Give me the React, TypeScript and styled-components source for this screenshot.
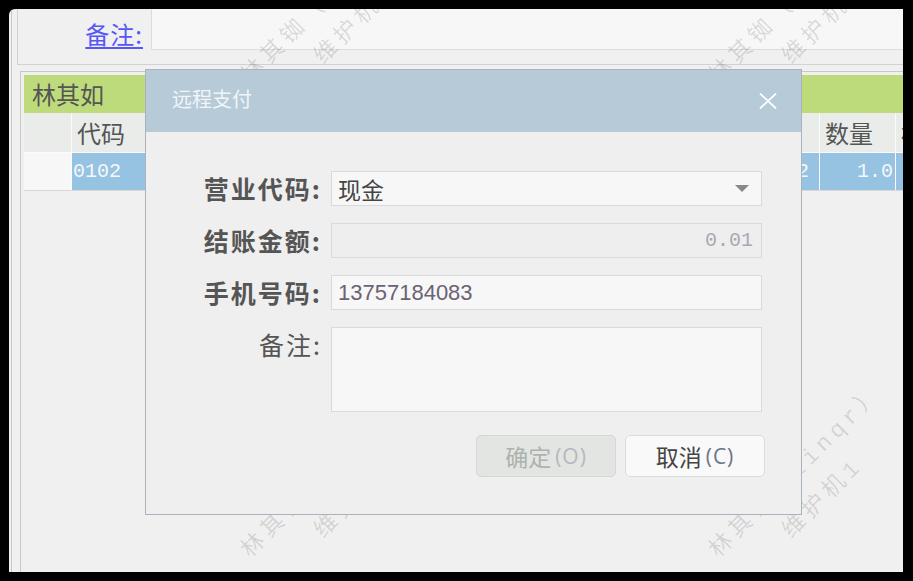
import React from "react";
import styled, { createGlobalStyle } from "styled-components";

const CJK = `"Noto Sans CJK SC", "Noto Sans", sans-serif`;
const MONO = `"Liberation Mono", "DejaVu Sans Mono", monospace`;

const GlobalStyle = createGlobalStyle`
  html, body {
    margin: 0;
    padding: 0;
    background: #000;
  }

  body {
    font-family: ${CJK};
  }
`;

const Frame = styled.div`
  width: 913px;
  height: 581px;
  box-sizing: border-box;
  padding: 9px 10px 9px 9px;
  background: #000;
`;

const Screen = styled.div`
  position: relative;
  height: 100%;
  display: flex;
  padding-left: 2px;
  background: #f0f0f0;
  border-radius: 6px 0 0 0;
  overflow: hidden;
`;

const Workspace = styled.div`
  flex: 1;
  min-width: 0;
  display: flex;
  flex-direction: column;
  border-left: 1px solid #c9c9c9;
`;

const RemarkBar = styled.div`
  height: 55px;
  margin-left: 5px;
  display: flex;
  align-items: flex-start;
  border-left: 1px solid #d2d2d2;
  border-bottom: 1px solid #d2d2d2;
`;

const RemarkLabel = styled.a`
  width: 125px;
  padding-top: 9px;
  text-align: right;
  font-size: 24px;
  letter-spacing: 1px;
  line-height: 32px;
  color: #5757f5;
  text-decoration: underline;
  text-underline-offset: 3px;
`;

const RemarkInput = styled.div`
  flex: 1;
  height: 40px;
  margin: 0 -20px 0 8px;
  background: #f7f7f7;
  border: 1px solid #dcdcdc;
  border-top: none;
`;

const GridPanel = styled.div`
  flex: 1;
  margin: 6px 0 0 8px;
  padding: 3px 0 0 3px;
  border-left: 1px solid #c8c8c8;
  border-top: 1px solid #c8c8c8;
`;

const GridTitle = styled.div`
  height: 38px;
  padding-left: 8px;
  background: #bedb7b;
  color: #555;
  font-size: 24px;
  line-height: 38px;
`;

const Table = styled.div`
  display: grid;
  grid-template-columns: 47px 100px 200px 200px 244px 75px 1fr;
  grid-template-rows: 39px 37px;
  column-gap: 1px;
  row-gap: 1px;
  background: #fbfbfb;
  border-bottom: 1px solid #d9d9d9;
`;

const HeadCell = styled.div`
  padding-left: 5px;
  background: #e9ece9;
  color: #555;
  font-size: 24px;
  line-height: 39px;
  white-space: nowrap;
  overflow: hidden;
`;

const DataCell = styled.div<{ $blank?: boolean; $pad?: number }>`
  padding: 0 ${(p) => p.$pad ?? 0}px 0 1px;
  background: ${(p) => (p.$blank ? "#f7f7f7" : "#95c3e1")};
  color: #f4f8fc;
  font-family: ${MONO};
  font-size: 20px;
  line-height: 37px;
  text-align: ${(p) => (p.$pad !== undefined ? "right" : "left")};
  white-space: nowrap;
  overflow: hidden;
`;

const WatermarkLayer = styled.div`
  position: absolute;
  inset: 0;
  pointer-events: none;
  z-index: 1;
`;

const Mark = styled.div<{ $x: number; $y: number }>`
  position: absolute;
  left: ${(p) => p.$x}px;
  top: ${(p) => p.$y}px;
  transform: translate(-50%, -50%) rotate(-45deg);
  text-align: center;
  white-space: nowrap;
  font-family: "Liberation Mono", ${CJK};
  font-size: 23px;
  line-height: 38px;
  letter-spacing: 5px;
  color: rgba(0, 0, 0, 0.13);
`;

const Dialog = styled.div`
  position: absolute;
  left: 136px;
  top: 60px;
  z-index: 2;
  width: 657px;
  height: 446px;
  box-sizing: border-box;
  display: flex;
  flex-direction: column;
  background: #efefef;
  border: 1px solid #aab3bd;
`;

const DialogHeader = styled.div`
  height: 62px;
  display: flex;
  align-items: center;
  justify-content: space-between;
  padding: 0 24px 0 26px;
  background: #b7cad8;
`;

const DialogTitle = styled.div`
  margin-top: -5px;
  color: #f1f5f8;
  font-size: 20px;
`;

const CloseButton = styled.svg`
  width: 18px;
  height: 16px;
`;

const Form = styled.div`
  display: grid;
  grid-template-columns: 176px 431px;
  grid-template-rows: 35px 35px 35px 85px auto;
  column-gap: 9px;
  row-gap: 17px;
  padding-top: 39px;
`;

const Label = styled.div<{ $bold?: boolean }>`
  text-align: right;
  color: #555;
  font-size: 25px;
  font-weight: ${(p) => (p.$bold ? 700 : 400)};
  letter-spacing: 2px;
  line-height: 35px;
`;

const Field = styled.div<{ $disabled?: boolean }>`
  box-sizing: border-box;
  display: flex;
  align-items: center;
  padding: 0 8px 0 6px;
  background: ${(p) => (p.$disabled ? "#eeeeee" : "#f7f7f7")};
  border: 1px solid #dadada;
`;

const TextValue = styled.span`
  flex: 1;
  color: #444;
  font-size: 23px;
`;

const PhoneValue = styled.span`
  color: #6b6274;
  font-family: "Liberation Sans", Arial, sans-serif;
  font-size: 22px;
`;

const AmountValue = styled.span`
  flex: 1;
  text-align: right;
  color: #a9a9b2;
  font-family: ${MONO};
  font-size: 20px;
`;

const Caret = styled.svg`
  width: 14px;
  height: 7px;
  margin-right: 4px;
`;

const Actions = styled.div`
  grid-column: 2;
  display: flex;
  justify-content: flex-end;
  gap: 9px;
  margin: 6px -3px 0 0;
`;

const Button = styled.div<{ $disabled?: boolean }>`
  width: 140px;
  height: 42px;
  box-sizing: border-box;
  display: flex;
  align-items: center;
  justify-content: center;
  border-radius: 5px;
  border: 1px solid ${(p) => (p.$disabled ? "#d5d9d5" : "#dcdcdc")};
  background: ${(p) => (p.$disabled ? "#e2e5e2" : "#f9f9f9")};
  color: ${(p) => (p.$disabled ? "#aeb2ae" : "#444")};
  font-size: 23px;
`;

const Hotkey = styled.span<{ $disabled?: boolean }>`
  margin-left: 4px;
  color: ${(p) => (p.$disabled ? "#b4b8bc" : "#6b7489")};
  font-family: "Open Sans", "Noto Sans", sans-serif;
  font-size: 21px;
  letter-spacing: 1px;
`;

const marks = [
  { x: 333, y: 2 },
  { x: 801, y: 2 },
  { x: 333, y: 476 },
  { x: 801, y: 476 },
];

const App: React.FC = () => {
  return (
    <>
      <GlobalStyle />
      <Frame>
        <Screen>
          <Workspace>
            <RemarkBar>
              <RemarkLabel>备注:</RemarkLabel>
              <RemarkInput />
            </RemarkBar>
            <GridPanel>
              <GridTitle>林其如</GridTitle>
              <Table>
                <HeadCell />
                <HeadCell>代码</HeadCell>
                <HeadCell>名称</HeadCell>
                <HeadCell>规格</HeadCell>
                <HeadCell>单价</HeadCell>
                <HeadCell>数量</HeadCell>
                <HeadCell>标价</HeadCell>
                <DataCell $blank />
                <DataCell>0102</DataCell>
                <DataCell />
                <DataCell />
                <DataCell $pad={10}>0.02</DataCell>
                <DataCell $pad={2}>1.0</DataCell>
                <DataCell />
              </Table>
            </GridPanel>
          </Workspace>

          <WatermarkLayer>
            {marks.map((m, i) => (
              <Mark key={i} $x={m.x} $y={m.y}>
                林其铷（linqr）
                <br />
                维护机1
              </Mark>
            ))}
          </WatermarkLayer>

          <Dialog>
            <DialogHeader>
              <DialogTitle>远程支付</DialogTitle>
              <CloseButton viewBox="0 0 18 16">
                <path d="M1 0.5 L17 15.5 M17 0.5 L1 15.5" stroke="#fff" strokeWidth="1.8" />
              </CloseButton>
            </DialogHeader>
            <Form>
              <Label $bold>营业代码:</Label>
              <Field>
                <TextValue>现金</TextValue>
                <Caret viewBox="0 0 14 7">
                  <polygon points="0,0 14,0 7,7" fill="#888" />
                </Caret>
              </Field>
              <Label $bold>结账金额:</Label>
              <Field $disabled>
                <AmountValue>0.01</AmountValue>
              </Field>
              <Label $bold>手机号码:</Label>
              <Field>
                <PhoneValue>13757184083</PhoneValue>
              </Field>
              <Label>备注:</Label>
              <Field />
              <Actions>
                <Button $disabled>
                  确定<Hotkey $disabled>(O)</Hotkey>
                </Button>
                <Button>
                  取消<Hotkey>(C)</Hotkey>
                </Button>
              </Actions>
            </Form>
          </Dialog>
        </Screen>
      </Frame>
    </>
  );
};

export default App;
